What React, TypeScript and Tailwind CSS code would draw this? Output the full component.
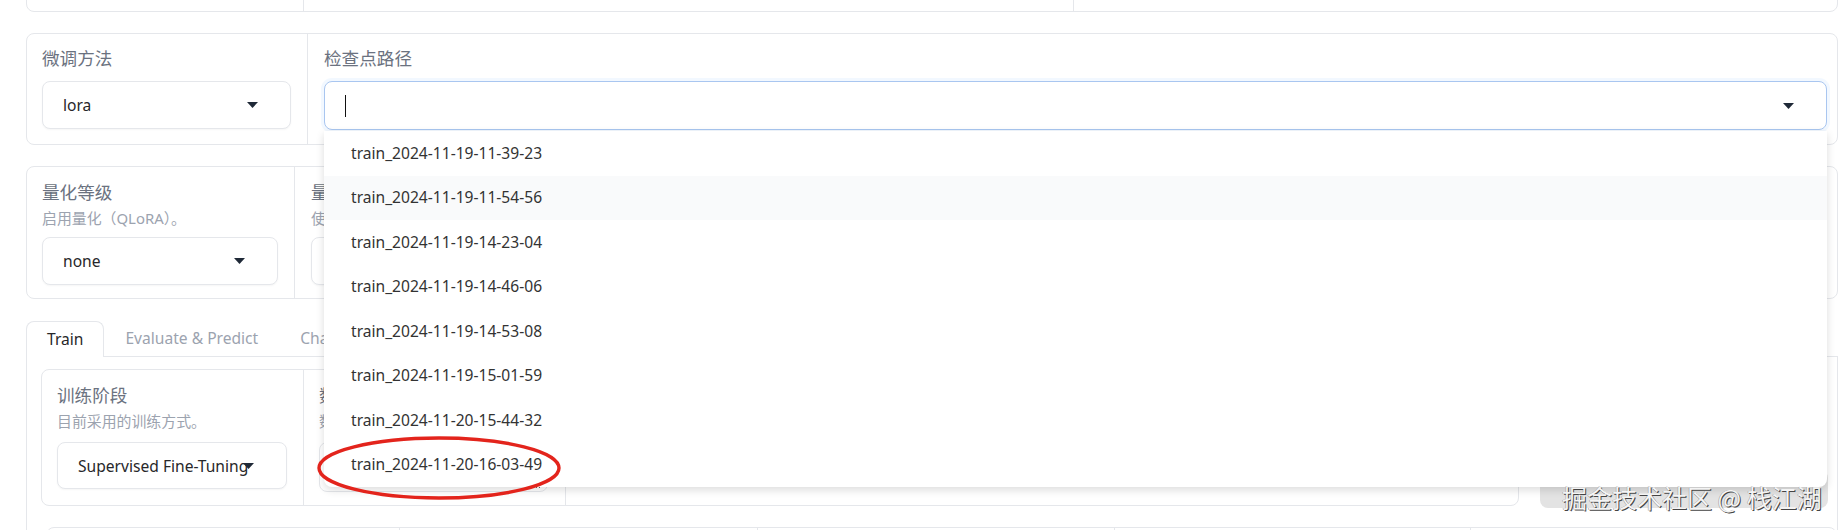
import React from "react";

const items = [
  "train_2024-11-19-11-39-23",
  "train_2024-11-19-11-54-56",
  "train_2024-11-19-14-23-04",
  "train_2024-11-19-14-46-06",
  "train_2024-11-19-14-53-08",
  "train_2024-11-19-15-01-59",
  "train_2024-11-20-15-44-32",
  "train_2024-11-20-16-03-49",
];

function Caret() {
  return (
    <svg
      width="11"
      height="6"
      viewBox="0 0 11 6"
      className="absolute right-[32px] top-1/2 -translate-y-1/2"
    >
      <path d="M0 0h11L5.5 6z" fill="#1f2937" />
    </svg>
  );
}

function Select({ value, className }: { value: string; className: string }) {
  return (
    <div
      className={
        "relative flex items-center rounded-lg border border-[#e5e7eb] bg-white pl-5 pr-[30px] shadow-[0_1px_2px_rgba(0,0,0,0.04)] " +
        className
      }
    >
      <span className="overflow-hidden whitespace-nowrap pt-[2px] text-[15.6px] text-[#27272a]">
        {value}
      </span>
      <Caret />
    </div>
  );
}

function Label({ children }: { children: React.ReactNode }) {
  return (
    <div className="whitespace-nowrap text-[17.6px] leading-[26px] text-[#6b7280]">
      {children}
    </div>
  );
}

function Info({ children }: { children: React.ReactNode }) {
  return (
    <div className="mt-[3px] whitespace-nowrap text-[14.9px] leading-[20px] text-[#9ca3af]">
      {children}
    </div>
  );
}

export default function App() {
  return (
    <div className="relative h-[530px] w-[1839px] overflow-hidden bg-white font-['Noto_Sans','Noto_Sans_CJK_SC',sans-serif]">
      <div className="flex flex-col pl-[26px] pr-[1px]">
        {/* top card (scrolled, only bottom visible) */}
        <div className="-mt-[48px] flex h-[60px] rounded-lg border border-[#e5e7eb] bg-white">
          <div className="w-[276px] shrink-0" />
          <div className="w-[770px] shrink-0 border-l border-[#e5e7eb]" />
          <div className="flex-1 border-l border-[#e5e7eb]" />
        </div>

        {/* 微调方法 / 检查点路径 */}
        <div className="mt-[21px] flex h-[112px] rounded-lg border border-[#e5e7eb] bg-white">
          <div className="w-[280px] shrink-0 pl-[15px] pt-[11px]">
            <Label>微调方法</Label>
            <Select value="lora" className="mt-[10px] h-[48px] w-[249px]" />
          </div>
          <div className="flex-1 border-l border-[#e5e7eb] pl-4 pr-[10px] pt-[11px]">
            <Label>检查点路径</Label>
            <div className="relative mt-[10px]">
              <div className="relative flex h-[49px] items-center rounded-lg border border-[#a9c6f0] bg-white pl-5 shadow-[0_0_0_3px_rgba(219,234,254,0.35)]">
                <span className="h-[22px] w-px bg-[#111111]" />
                <Caret />
              </div>
              {/* dropdown menu */}
              <div className="absolute left-0 right-0 top-full z-30 mt-px rounded-b-lg bg-white shadow-[0_3px_8px_rgba(0,0,0,0.14)]">
                {items.map((it, i) => (
                  <div
                    key={it}
                    className={
                      "flex h-[44.5px] items-center pl-[27px] text-[15.6px] text-[#333333] " +
                      (i === 1 ? "bg-[#f9fafb]" : "")
                    }
                  >
                    {it}
                  </div>
                ))}
                <svg
                  className="pointer-events-none absolute left-[-8px] top-[304px]"
                  width="246"
                  height="66"
                  viewBox="0 0 246 66"
                >
                  <ellipse
                    cx="123"
                    cy="33"
                    rx="120"
                    ry="30"
                    fill="none"
                    stroke="#e3241c"
                    strokeWidth="3.4"
                  />
                </svg>
              </div>
            </div>
          </div>
        </div>

        {/* 量化等级 */}
        <div className="mt-[21px] flex h-[133px] rounded-lg border border-[#e5e7eb] bg-white">
          <div className="w-[267px] shrink-0 pl-[15px] pt-3">
            <Label>量化等级</Label>
            <Info>启用量化（QLoRA）。</Info>
            <Select value="none" className="mt-[9px] h-[48px] w-[236px]" />
          </div>
          <div className="flex-1 border-l border-[#e5e7eb] pl-4 pt-3">
            <Label>量化方法</Label>
            <Info>使用的量化方法。</Info>
            <Select value="bitsandbytes" className="mt-[9px] h-[48px] w-[236px]" />
          </div>
        </div>

        {/* Tabs */}
        <div className="mt-[22px] flex h-[36px] border-b border-[#e5e7eb]">
          <div className="-mb-px flex h-[36px] items-center rounded-t-lg border border-b-0 border-[#e5e7eb] bg-white px-5 text-[15.6px] text-[#27272a]">
            Train
          </div>
          <div className="flex h-[35px] items-center border border-transparent px-5 text-[15.6px] text-[#9ca3af]">
            Evaluate &amp; Predict
          </div>
          <div className="flex h-[35px] items-center border border-transparent px-5 text-[15.6px] text-[#9ca3af]">
            Chat
          </div>
          <div className="flex h-[35px] items-center border border-transparent px-5 text-[15.6px] text-[#9ca3af]">
            Export
          </div>
        </div>

        {/* Tab panel */}
        <div className="flex h-[300px] flex-col border-x border-[#e5e7eb] pl-[14px] pt-3">
          <div className="flex h-[137px] w-[1478px] rounded-lg border border-[#e5e7eb] bg-white">
            <div className="w-[261px] shrink-0 pl-[15px] pt-3">
              <Label>训练阶段</Label>
              <Info>目前采用的训练方式。</Info>
              <Select
                value="Supervised Fine-Tuning"
                className="mt-[11px] h-[47px] w-[230px]"
              />
            </div>
            <div className="w-[262px] shrink-0 border-l border-[#e5e7eb] pl-[15px] pt-3">
              <Label>数据路径</Label>
              <Info>数据文件夹的路径。</Info>
              <div className="relative mt-[11px] h-[50px] w-[229px] rounded-lg border border-[#e5e7eb] bg-white">
                <svg
                  className="absolute bottom-[2px] right-[4px]"
                  width="8"
                  height="8"
                  viewBox="0 0 8 8"
                >
                  <path d="M1 7L7 1M4 7L7 4" stroke="#555" strokeWidth="0.9" />
                </svg>
              </div>
            </div>
            <div className="flex-1 border-l border-[#e5e7eb]" />
          </div>

          <div className="ml-[5px] mt-[21px] flex h-[100px] rounded-t-lg border border-[#e5e7eb] bg-white">
            <div className="w-[352px] shrink-0" />
            <div className="w-[358px] shrink-0 border-l border-[#e5e7eb]" />
            <div className="w-[357px] shrink-0 border-l border-[#e5e7eb]" />
            <div className="w-[356px] shrink-0 border-l border-[#e5e7eb]" />
            <div className="flex-1 border-l border-[#e5e7eb]" />
          </div>
        </div>
      </div>

      {/* watermark */}
      <div className="absolute left-[1540px] top-[470px] z-10 h-[38px] w-[288px] rounded-lg bg-[#e3e3e3]" />
      <div className="absolute left-[1562px] top-[481px] z-40 whitespace-nowrap font-['Noto_Sans_CJK_SC',sans-serif] text-[25px] leading-[32px] text-[#f4f4f4] [text-shadow:1px_1px_0_#444,-0.5px_-0.5px_0_#999]">
        掘金技术社区 @ 栈江湖
      </div>
    </div>
  );
}
